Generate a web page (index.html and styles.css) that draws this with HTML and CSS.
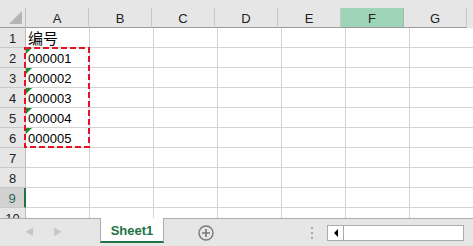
FILE: index.html
```html
<!DOCTYPE html>
<html lang="zh-CN">
<head>
    <meta charset="UTF-8">
    <title>Sheet1</title>
    <link rel="stylesheet" href="styles.css">
</head>
<body>
    <div class="app">
        <div class="top-strip"></div>
        <div class="col-head">
            <div class="corner"><span class="corner-tri"></span></div>
            <div class="ch">A</div>
            <div class="ch">B</div>
            <div class="ch">C</div>
            <div class="ch">D</div>
            <div class="ch">E</div>
            <div class="ch active">F</div>
            <div class="ch">G</div>
        </div>
        <div class="grid-body">
            <div class="row"><div class="rh">1</div><div class="cell cjk">编号</div><div class="cell"></div><div class="cell"></div><div class="cell"></div><div class="cell"></div><div class="cell"></div><div class="cell"></div></div>
            <div class="row"><div class="rh">2</div><div class="cell txt">000001</div><div class="cell"></div><div class="cell"></div><div class="cell"></div><div class="cell"></div><div class="cell"></div><div class="cell"></div></div>
            <div class="row"><div class="rh">3</div><div class="cell txt">000002</div><div class="cell"></div><div class="cell"></div><div class="cell"></div><div class="cell"></div><div class="cell"></div><div class="cell"></div></div>
            <div class="row"><div class="rh">4</div><div class="cell txt">000003</div><div class="cell"></div><div class="cell"></div><div class="cell"></div><div class="cell"></div><div class="cell"></div><div class="cell"></div></div>
            <div class="row"><div class="rh">5</div><div class="cell txt">000004</div><div class="cell"></div><div class="cell"></div><div class="cell"></div><div class="cell"></div><div class="cell"></div><div class="cell"></div></div>
            <div class="row"><div class="rh">6</div><div class="cell txt">000005</div><div class="cell"></div><div class="cell"></div><div class="cell"></div><div class="cell"></div><div class="cell"></div><div class="cell"></div></div>
            <div class="row"><div class="rh">7</div><div class="cell"></div><div class="cell"></div><div class="cell"></div><div class="cell"></div><div class="cell"></div><div class="cell"></div><div class="cell"></div></div>
            <div class="row"><div class="rh">8</div><div class="cell"></div><div class="cell"></div><div class="cell"></div><div class="cell"></div><div class="cell"></div><div class="cell"></div><div class="cell"></div></div>
            <div class="row"><div class="rh sel">9</div><div class="cell"></div><div class="cell"></div><div class="cell"></div><div class="cell"></div><div class="cell"></div><div class="cell"></div><div class="cell"></div></div>
            <div class="row"><div class="rh">10</div><div class="cell"></div><div class="cell"></div><div class="cell"></div><div class="cell"></div><div class="cell"></div><div class="cell"></div><div class="cell"></div></div>
            <!-- copy marquee around A2:A6 -->
            <svg class="marquee" width="66" height="101" viewBox="0 0 66 101">
                <rect x="1" y="1" width="64" height="99" fill="none" stroke="#e81123" stroke-width="2" stroke-dasharray="6 3"/>
            </svg>
        </div>
        <div class="tab-bar">
            <div class="nav">
                <span class="nav-arrow">&#9664;</span>
                <span class="nav-arrow">&#9654;</span>
            </div>
            <div class="tab">Sheet1</div>
            <div class="add">
                <svg width="16" height="16" viewBox="0 0 16 16">
                    <circle cx="8" cy="8" r="7" fill="none" stroke="#7a7a7a" stroke-width="1.4"/>
                    <path d="M8 4v8M4 8h8" stroke="#7a7a7a" stroke-width="1.6"/>
                </svg>
            </div>
            <div class="dots"><i></i><i></i><i></i></div>
            <div class="hscroll">
                <div class="hs-btn"><span class="hs-arrow"></span></div>
            </div>
        </div>
    </div>
</body>
</html>
```

FILE: styles.css
```css
html, body {
    margin: 0;
    padding: 0;
    background: #fff;
    font-family: "Liberation Sans", Arial, sans-serif;
}
.app {
    width: 473px;
    height: 246px;
    overflow: hidden;
    position: relative;
}
.top-strip {
    height: 8px;
    background: #e6e6e6;
}
.col-head {
    display: flex;
    height: 20px;
    background: #e6e6e6;
}
.corner {
    width: 25px;
    flex: none;
    border-right: 1px solid #bdbdbd;
    border-bottom: 1px solid #9b9b9b;
    position: relative;
}
.corner-tri {
    position: absolute;
    right: 3px;
    bottom: 3px;
    width: 0;
    height: 0;
    border-left: 13px solid transparent;
    border-bottom: 13px solid #b4b4b4;
}
.ch {
    width: 63px;
    flex: none;
    border-right: 1px solid #c8c8c8;
    border-bottom: 1px solid #9b9b9b;
    font-size: 13px;
    color: #222;
    display: flex;
    align-items: center;
    justify-content: center;
    padding-top: 1px;
    box-sizing: border-box;
}
.ch.active {
    background: #9fd5b7;
    border-right-color: #9bbfaa;
}
.grid-body {
    position: relative;
    height: 190px;
    overflow: hidden;
}
.row {
    display: flex;
    height: 20px;
}
.rh {
    width: 25px;
    height: 19px;
    flex: none;
    background: #e6e6e6;
    border-right: 1px solid #bdbdbd;
    border-bottom: 1px solid #c8c8c8;
    font-size: 13px;
    color: #222;
    text-align: center;
    line-height: 21px;
}
.rh.sel {
    background: #d2d2d2;
    color: #2b6b55;
    border-right: 2px solid #217346;
    width: 24px;
}
.cell {
    width: 61px;
    height: 19px;
    flex: none;
    border-right: 1px solid #d4d4d4;
    border-bottom: 1px solid #d4d4d4;
    font-size: 13px;
    color: #000;
    padding-left: 2px;
    line-height: 21px;
    position: relative;
}
.cell.cjk {
    font-family: "Noto Sans CJK SC", sans-serif;
    font-size: 15px;
    line-height: 19px;
}
.cell.txt::before {
    content: "";
    position: absolute;
    left: 0;
    top: 0;
    border-top: 6px solid #1e8a34;
    border-right: 6px solid transparent;
}
.marquee {
    position: absolute;
    left: 24px;
    top: 19px;
}
.tab-bar {
    display: flex;
    align-items: flex-start;
    height: 28px;
    background: #e6e6e6;
    border-top: 1px solid #ababab;
    box-sizing: border-box;
}
.nav {
    width: 100px;
    flex: none;
    display: flex;
    gap: 19px;
    padding: 7px 0 0 25px;
    box-sizing: border-box;
}
.nav-arrow {
    color: #c6c6c6;
    font-size: 9px;
    line-height: 12px;
}
.tab {
    width: 64px;
    height: 25px;
    flex: none;
    margin-top: -1px;
    background: #fff;
    border-left: 1px solid #ababab;
    border-right: 1px solid #ababab;
    border-bottom: 2px solid #217346;
    box-sizing: border-box;
    color: #217346;
    font-weight: bold;
    font-size: 13px;
    text-align: center;
    line-height: 26px;
}
.add {
    margin: 6px 0 0 34px;
    width: 16px;
    height: 16px;
}
.dots {
    margin: 8px 0 0 97px;
    display: flex;
    flex-direction: column;
    gap: 3px;
}
.dots i {
    display: block;
    width: 2px;
    height: 2px;
    background: #a8a8a8;
}
.hscroll {
    margin: 6px 0 0 14px;
    width: 137px;
    height: 16px;
    flex: none;
    background: #fff;
    border: 1px solid #ababab;
    box-sizing: border-box;
}
.hs-btn {
    width: 15px;
    height: 14px;
    border-right: 1px solid #ababab;
    display: flex;
    align-items: center;
    justify-content: center;
}
.hs-arrow {
    width: 0;
    height: 0;
    border-top: 4px solid transparent;
    border-bottom: 4px solid transparent;
    border-right: 4px solid #000;
}
```
